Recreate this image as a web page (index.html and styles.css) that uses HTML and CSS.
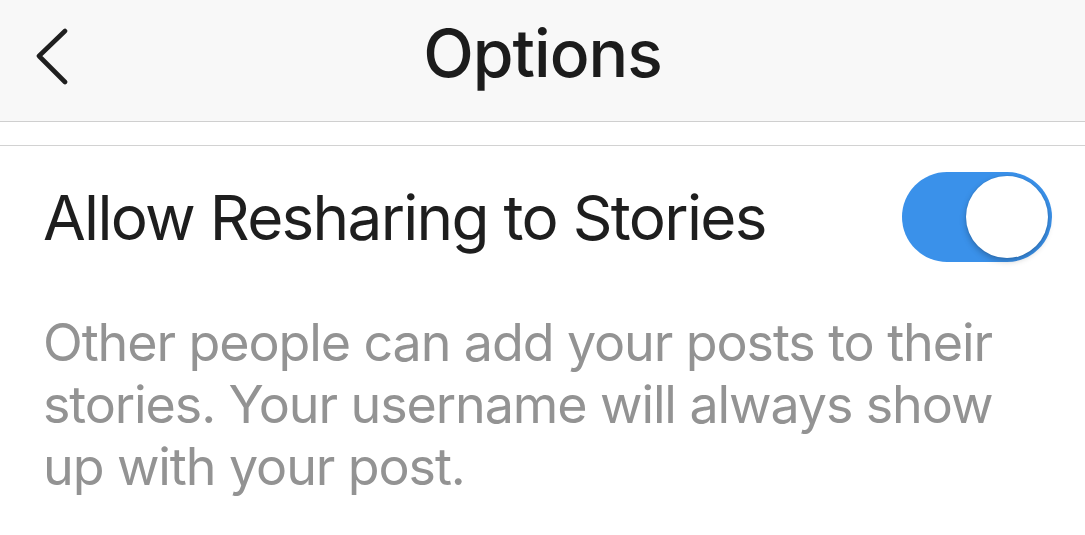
FILE: index.html
```html
<!DOCTYPE html>
<html lang="en">
<head>
<meta charset="utf-8">
<title>Options</title>
<link rel="stylesheet" href="styles.css">
</head>
<body>
<header class="nav">
  <div class="nav-left">
    <svg class="back" width="34" height="58" viewBox="0 0 34 58" aria-hidden="true">
      <polyline points="30,3 4,28 30,54" fill="none" stroke="#1f1f1f" stroke-width="4.6" stroke-linecap="round" stroke-linejoin="round"/>
    </svg>
  </div>
  <h1 class="title">Options</h1>
  <div class="nav-right"></div>
</header>
<main class="content">
  <section class="group">
    <div class="row">
      <span class="label">Allow Resharing to Stories</span>
      <span class="switch on"><span class="knob"></span></span>
    </div>
    <p class="note">Other people can add your posts to their stories. Your username will always show up with your post.</p>
  </section>
</main>
</body>
</html>
```
FILE: styles.css
```css
html, body {
  margin: 0;
  padding: 0;
  background: #ffffff;
}
body {
  font-family: Inter, "Noto Sans", sans-serif;
  width: 1085px;
  height: 535px;
  overflow: hidden;
}
.nav {
  display: grid;
  grid-template-columns: 1fr auto 1fr;
  align-items: center;
  height: 121px;
  background: #f8f8f8;
  border-bottom: 1px solid #cfcfcf;
}
.nav-left {
  display: flex;
  align-items: center;
  padding-left: 35px;
  padding-bottom: 8px;
}
.title {
  margin: 0;
  font-size: 66px;
  font-weight: 500;
  color: #1c1c1c;
  line-height: 80px;
  padding-bottom: 16px;
  letter-spacing: -1px;
}
.content {
  padding-top: 23px;
}
.group {
  border-top: 1px solid #d2d2d2;
}
.row {
  display: flex;
  align-items: center;
  justify-content: space-between;
  padding: 26px 33px 0 43px;
  height: 90px;
}
.label {
  font-size: 62px;
  color: #1e1e1e;
  letter-spacing: -1.7px;
}
.switch {
  position: relative;
  display: inline-block;
  width: 150px;
  height: 90px;
  border-radius: 45px;
  background: #3a91ea;
}
.knob {
  position: absolute;
  top: 4px;
  right: 4px;
  width: 82px;
  height: 82px;
  border-radius: 50%;
  background: #ffffff;
  box-shadow: 0 3px 6px rgba(0,0,0,0.25), 0 0 0 1px rgba(0,0,0,0.04);
}
.note {
  margin: 0;
  padding: 50px 30px 0 43px;
  font-size: 52px;
  line-height: 62px;
  color: #939393;
  letter-spacing: -1.1px;
}
```
